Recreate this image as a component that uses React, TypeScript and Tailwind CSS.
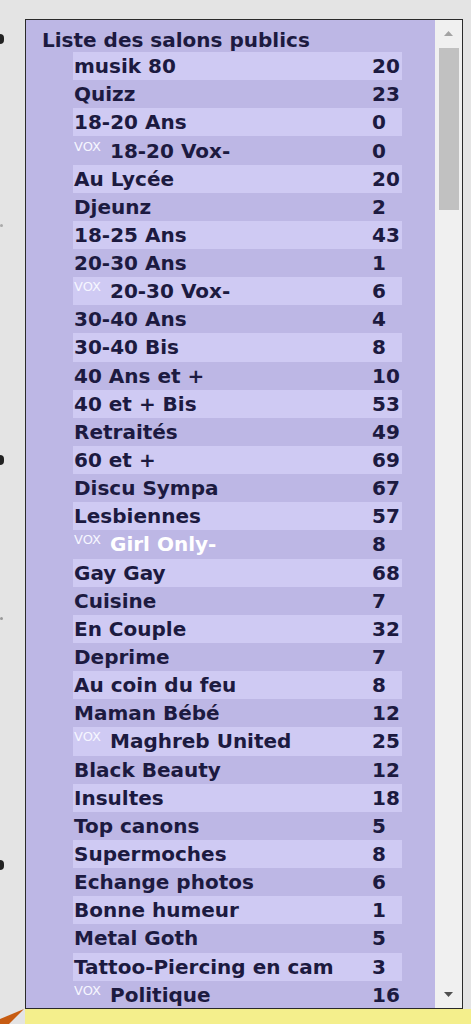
import React from "react";

type Salon = { name: string; count: number; vox?: boolean; white?: boolean };

const salons: Salon[] = [
  { name: "musik 80", count: 20 },
  { name: "Quizz", count: 23 },
  { name: "18-20 Ans", count: 0 },
  { name: "18-20 Vox-", count: 0, vox: true },
  { name: "Au Lycée", count: 20 },
  { name: "Djeunz", count: 2 },
  { name: "18-25 Ans", count: 43 },
  { name: "20-30 Ans", count: 1 },
  { name: "20-30 Vox-", count: 6, vox: true },
  { name: "30-40 Ans", count: 4 },
  { name: "30-40 Bis", count: 8 },
  { name: "40 Ans et +", count: 10 },
  { name: "40 et + Bis", count: 53 },
  { name: "Retraités", count: 49 },
  { name: "60 et +", count: 69 },
  { name: "Discu Sympa", count: 67 },
  { name: "Lesbiennes", count: 57 },
  { name: "Girl Only-", count: 8, vox: true, white: true },
  { name: "Gay Gay", count: 68 },
  { name: "Cuisine", count: 7 },
  { name: "En Couple", count: 32 },
  { name: "Deprime", count: 7 },
  { name: "Au coin du feu", count: 8 },
  { name: "Maman Bébé", count: 12 },
  { name: "Maghreb United", count: 25, vox: true },
  { name: "Black Beauty", count: 12 },
  { name: "Insultes", count: 18 },
  { name: "Top canons", count: 5 },
  { name: "Supermoches", count: 8 },
  { name: "Echange photos", count: 6 },
  { name: "Bonne humeur", count: 1 },
  { name: "Metal Goth", count: 5 },
  { name: "Tattoo-Piercing en cam", count: 3 },
  { name: "Politique", count: 16, vox: true },
];

function SalonRow({ salon, light }: { salon: Salon; light: boolean }) {
  return (
    <div
      className={`flex items-center h-[28.15px] w-[329px] ml-[47px] shrink-0 ${
        light ? "bg-[#cfcaf3]" : "bg-[#bdb7e5]"
      }`}
    >
      <div className="w-[299px] pl-px flex items-center whitespace-nowrap">
        {salon.vox && (
          <span className="text-[13px] font-normal text-[#f6f6ff] mr-[9px] -mt-[9px] leading-none">VOX</span>
        )}
        <span className={salon.white ? "text-white" : "text-[#1c1a40]"}>{salon.name}</span>
      </div>
      <span className="text-[#1c1a40]">{salon.count}</span>
    </div>
  );
}

export default function App() {
  return (
    <div
      className="w-[471px] h-[1024px] bg-[#e4e4e4] overflow-hidden flex flex-col"
      style={{ fontFamily: '"DejaVu Sans", Verdana, sans-serif' }}
    >
      <div className="h-[19px] shrink-0" />
      <div className="flex shrink-0">
        {/* left gutter with cut-off marks */}
        <div className="w-[25px] flex flex-col">
          <div className="h-[15px]" />
          <div className="w-[4px] h-[10px] bg-[#222] rounded-r-sm" />
          <div className="h-[180px]" />
          <div className="w-[3px] h-[3px] bg-[#aaa] rounded-full" />
          <div className="h-[228px]" />
          <div className="w-[4px] h-[10px] bg-[#222] rounded-r-sm" />
          <div className="h-[152px]" />
          <div className="w-[3px] h-[3px] bg-[#999] rounded-full" />
          <div className="h-[240px]" />
          <div className="w-[4px] h-[10px] bg-[#222] rounded-r-sm" />
        </div>
        <div className="w-[438px] h-[990px] border border-[#2a2a2a] flex">
          <div className="flex-1 bg-[#bdb7e5] overflow-hidden flex flex-col text-[20px] font-bold">
            <div className="h-[32px] shrink-0 pt-[8px] leading-[24px] pl-[16px] text-[#1c1a40] whitespace-nowrap">
              Liste des salons publics
            </div>
            {salons.map((s, i) => (
              <SalonRow key={s.name} salon={s} light={i % 2 === 0} />
            ))}
          </div>
          <div className="w-[27px] bg-[#f0f0f0] flex flex-col items-center">
            <div className="h-[27px] flex items-center justify-center">
              <svg width="9" height="5" viewBox="0 0 9 5">
                <path d="M0 5 L4.5 0 L9 5 Z" fill="#a3a3a3" />
              </svg>
            </div>
            <div className="w-[20px] h-[162px] bg-[#c1c1c1] mt-px" />
            <div className="flex-1" />
            <div className="h-[27px] flex items-center justify-center">
              <svg width="9" height="5" viewBox="0 0 9 5">
                <path d="M0 0 L4.5 5 L9 0 Z" fill="#505050" />
              </svg>
            </div>
          </div>
        </div>
      </div>
      <div className="flex flex-1">
        <div className="w-[25px]">
          <svg width="25" height="16" viewBox="0 0 25 16" className="block">
            <path d="M0 10 L24 0 L8 16 L0 16 Z" fill="#c75c12" />
          </svg>
        </div>
        <div className="flex-1 bg-[#f4ef8c]" />
      </div>
    </div>
  );
}
